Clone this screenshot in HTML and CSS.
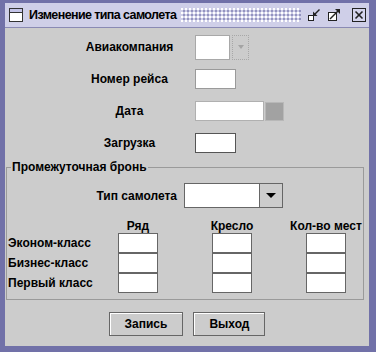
FILE: index.html
```html
<!DOCTYPE html>
<html lang="ru">
<head>
    <meta charset="UTF-8">
    <title>Изменение типа самолета</title>
    <link rel="stylesheet" href="styles.css">
</head>
<body>

    <div class="window">
        <div class="titlebar">
            <svg class="app-icon" width="14" height="14" viewBox="0 0 14 14">
                <rect x="0.5" y="0.5" width="13" height="13" fill="#fff" stroke="#333"/>
                <rect x="1" y="1" width="12" height="3" fill="#c4c4e8"/>
                <line x1="1" y1="4.5" x2="13" y2="4.5" stroke="#333"/>
            </svg>
            <span class="title">Изменение типа самолета</span>
            <span class="bumps"></span>
            <div class="title-buttons">
                <svg width="14" height="14" viewBox="0 0 14 14">
                    <rect x="1.5" y="7.5" width="5" height="5" fill="#fff" stroke="#222"/>
                    <line x1="7" y1="7" x2="12.5" y2="1.5" stroke="#222" stroke-width="1.4"/>
                    <polygon points="6,8 6,3.5 10.5,8" fill="#222"/>
                </svg>
                <svg width="14" height="14" viewBox="0 0 14 14">
                    <rect x="1.5" y="4.5" width="8" height="8" fill="#fff" stroke="#222"/>
                    <line x1="3" y1="11" x2="11" y2="3" stroke="#222" stroke-width="1.4"/>
                    <polygon points="13,1 8,1 13,6" fill="#222"/>
                </svg>
                <svg class="close-icon" width="14" height="14" viewBox="0 0 14 14">
                    <rect x="0.5" y="0.5" width="13" height="13" fill="#d4d4ec" stroke="#222"/>
                    <line x1="3.5" y1="3.5" x2="10.5" y2="10.5" stroke="#222" stroke-width="1.6"/>
                    <line x1="10.5" y1="3.5" x2="3.5" y2="10.5" stroke="#222" stroke-width="1.6"/>
                </svg>
            </div>
        </div>

        <div class="content">
            <div class="main-form">
                <label>Авиакомпания</label>
                <div class="combo-small">
                    <span class="combo-field"></span>
                    <span class="combo-btn disabled"><span class="arrow"></span></span>
                </div>

                <label>Номер рейса</label>
                <input type="text" class="field field-short">

                <label>Дата</label>
                <div class="date-box">
                    <input type="text" class="field field-date">
                    <span class="date-btn"></span>
                </div>

                <label>Загрузка</label>
                <input type="text" class="field field-short dark">
            </div>

            <fieldset class="group">
                <legend>Промежуточная бронь</legend>

                <div class="type-row">
                    <label>Тип самолета</label>
                    <div class="combo-wide">
                        <span class="combo-field"></span>
                        <span class="combo-btn"><span class="arrow"></span></span>
                    </div>
                </div>

                <div class="seat-grid">
                    <span></span>
                    <span class="col-head">Ряд</span>
                    <span class="col-head">Кресло</span>
                    <span class="col-head">Кол-во мест</span>

                    <span class="row-label">Эконом-класс</span>
                    <input type="text" class="cell">
                    <input type="text" class="cell">
                    <input type="text" class="cell">

                    <span class="row-label">Бизнес-класс</span>
                    <input type="text" class="cell">
                    <input type="text" class="cell">
                    <input type="text" class="cell">

                    <span class="row-label">Первый класс</span>
                    <input type="text" class="cell">
                    <input type="text" class="cell">
                    <input type="text" class="cell">
                </div>
            </fieldset>

            <div class="actions">
                <button type="button" class="btn">Запись</button>
                <button type="button" class="btn">Выход</button>
            </div>
        </div>
    </div>

</body>
</html>
```

FILE: styles.css
```css
* {
    margin: 0;
    padding: 0;
    box-sizing: border-box;
    font-family: 'Liberation Sans', Arial, sans-serif;
}

body {
    background: #6e6ea4;
    width: 376px;
    height: 352px;
    overflow: hidden;
}

.window {
    width: 376px;
    height: 352px;
    border-style: solid;
    border-color: #7171a8;
    border-width: 3px 7px 6px 5px;
    background: #cccccc;
    display: flex;
    flex-direction: column;
    color: #000;
    font-size: 12px;
    font-weight: bold;
}

/* title bar */
.titlebar {
    height: 25px;
    background: #cfcfe8;
    border-bottom: 1px solid #8a8ab4;
    display: flex;
    align-items: center;
    padding: 0 3px 0 4px;
}

.app-icon {
    flex: none;
    margin-right: 6px;
}

.title {
    font-size: 12.5px;
    letter-spacing: -0.6px;
    white-space: nowrap;
    color: #000;
}

.bumps {
    flex: 1;
    height: 14px;
    margin: 0 6px 0 5px;
    background-image:
        radial-gradient(circle at 1px 1px, #ffffff 0.9px, transparent 1px),
        radial-gradient(circle at 1px 1px, #9494c0 0.9px, transparent 1px);
    background-size: 4px 4px, 4px 4px;
    background-position: 0 0, 2px 2px;
}

.title-buttons {
    display: flex;
    align-items: center;
    gap: 6px;
}

.close-icon {
    margin-left: 5px;
}

/* main form */
.content {
    flex: 1;
    display: flex;
    flex-direction: column;
}

.main-form {
    display: grid;
    grid-template-columns: 85px auto;
    grid-auto-rows: 32px;
    column-gap: 23px;
    align-items: center;
    justify-items: start;
    padding: 3px 0 0 82px;
}

.main-form label {
    justify-self: center;
    white-space: nowrap;
}

.field {
    height: 20px;
    background: #fff;
    border: 1px solid #9a9a9a;
    outline: none;
}

.field.dark {
    border-color: #555;
}

.field-short {
    width: 41px;
}

.combo-small {
    display: flex;
    gap: 2px;
    height: 25px;
}

.combo-small .combo-field {
    width: 35px;
    background: #fff;
    border: 1px solid #a8a8a8;
}

.combo-btn {
    display: flex;
    align-items: center;
    justify-content: center;
    background: #cccccc;
}

.combo-small .combo-btn {
    width: 17px;
    border: 1px dotted #a8a8a8;
}

.arrow {
    width: 0;
    height: 0;
    border-left: 5px solid transparent;
    border-right: 5px solid transparent;
    border-top: 5px solid #000;
}

.disabled .arrow {
    border-left-width: 3px;
    border-right-width: 3px;
    border-top: 4px solid #a4a4a4;
}

.date-box {
    display: flex;
    align-items: center;
    gap: 1px;
}

.field-date {
    width: 69px;
    border-color: #b0b0b0;
}

.date-btn {
    width: 19px;
    height: 19px;
    background: #a2a2a2;
    border: 1px solid #b8b8b8;
}

/* titled group */
.group {
    margin: 1px 5px 0 1px;
    border: 1px solid #9a9a9a;
    padding: 0 0 6px;
}

.group legend {
    margin-left: 4px;
    padding: 0 1px;
    line-height: 14px;
}

.type-row {
    display: flex;
    align-items: center;
    gap: 7px;
    margin-top: 9px;
}

.type-row label {
    width: 170px;
    text-align: right;
    white-space: nowrap;
}

.combo-wide {
    display: flex;
    width: 99px;
    height: 25px;
    border: 1px solid #666;
    background: #fff;
}

.combo-wide .combo-field {
    flex: 1;
    background: #fff;
}

.combo-wide .combo-btn {
    width: 23px;
    border-left: 1px solid #666;
}

.seat-grid {
    display: grid;
    grid-template-columns: 56px repeat(3, 40px);
    grid-template-rows: 15px repeat(3, 20px);
    column-gap: 54px;
    align-items: center;
    margin-top: 10px;
    padding-left: 1px;
}

.col-head {
    justify-self: center;
    white-space: nowrap;
}

.row-label {
    white-space: nowrap;
}

.cell {
    width: 40px;
    height: 20px;
    background: #fff;
    border: 1px solid #666;
    outline: none;
}

/* buttons */
.actions {
    display: flex;
    justify-content: center;
    gap: 10px;
    margin-top: 12px;
}

.btn {
    height: 24px;
    padding: 0 15px;
    background: #cccccc;
    border: 1px solid #666;
    box-shadow: inset 1px 1px 0 #fff;
    font-size: 12px;
    font-weight: bold;
    color: #000;
}
```
